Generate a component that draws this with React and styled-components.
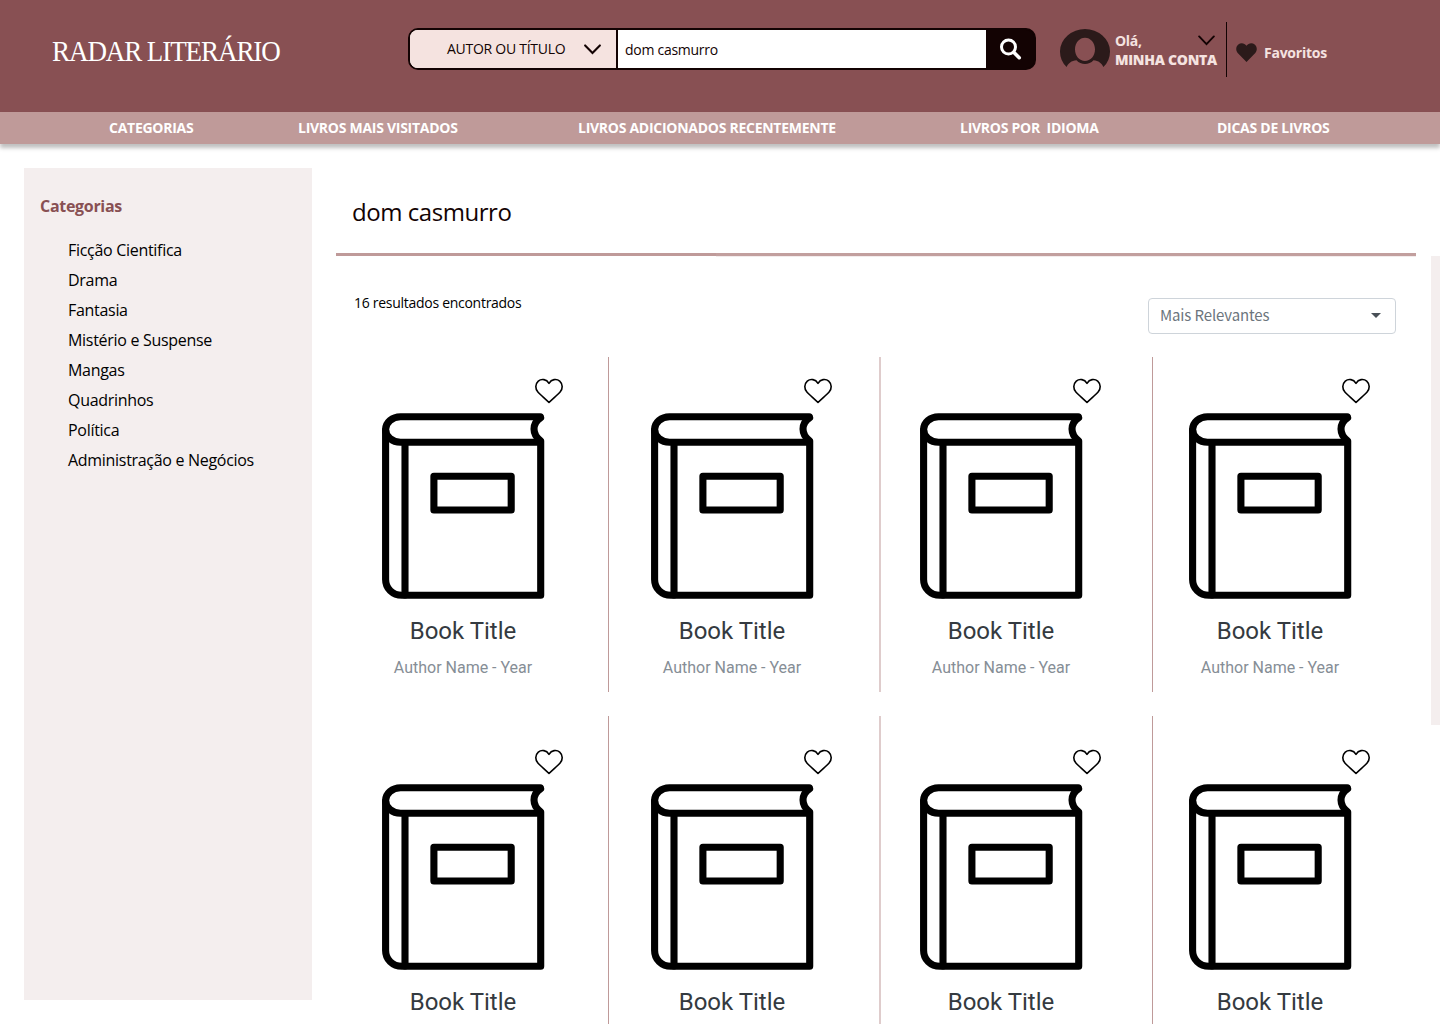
import React from "react";
import styled, { createGlobalStyle } from "styled-components";

const Global = createGlobalStyle`
  * { box-sizing: border-box; }
  body { margin: 0; background: #fff; font-family: "Open Sans", sans-serif; }
`;

const Page = styled.div`
  width: 1440px;
  height: 1024px;
  overflow: hidden;
  background: #fff;
`;
const Header = styled.header`
  height: 112px;
  background: #885053;
  display: flex;
  align-items: flex-start;
`;
const Logo = styled.div`
  width: 356px;
  margin: 33px 0 0 52px;
  font: 400 29.5px/36px "Liberation Serif", serif;
  letter-spacing: -1.2px;
  white-space: nowrap;
  color: #fff;
  transform: scaleX(0.917);
  transform-origin: 0 50%;
`;
const Search = styled.div`
  display: flex;
  width: 628px;
  height: 42px;
  margin-top: 28px;
  border: 2px solid #130303;
  border-radius: 10px;
  overflow: hidden;
  background: linear-gradient(90deg, #fff 600px, #130303 600px);
  color: #130303;
  font-size: 14px;
  line-height: 40px;
  letter-spacing: -0.27px;
`;
const Scope = styled.div`
  display: flex;
  align-items: center;
  width: 208px;
  padding-left: 37px;
  background: #f5e3e0;
  border-right: 2px solid #130303;
  white-space: nowrap;
`;
const ScopeText = styled.span`
  width: 137px;
`;
const Query = styled.div`
  flex: 1;
  padding-left: 7px;
`;
const SearchButton = styled.div`
  display: flex;
  align-items: center;
  width: 48px;
  padding-left: 12px;
  background: #130303;
`;
const Account = styled.div`
  display: flex;
  width: 167px;
  height: 55px;
  margin: 22px 0 0 24px;
  border-right: 1px solid #130303;
`;
const Avatar = styled.svg`
  flex: none;
  margin: 7px 5px 0 0;
`;
const AccountText = styled.div`
  flex: 1;
  padding-top: 9px;
  color: #f5e3e0;
  font-size: 14px;
  line-height: 19px;
  white-space: nowrap;
`;
const Greeting = styled.div`
  display: flex;
  justify-content: space-between;
  padding-right: 11px;
  font-weight: 700;
  letter-spacing: -0.3px;
`;
const AccountName = styled.div`
  font-weight: 800;
  letter-spacing: -0.27px;
`;
const Favorites = styled.div`
  display: flex;
  align-items: center;
  gap: 7px;
  margin: 42px 0 0 9px;
  height: 21px;
  color: #f5e3e0;
  font-size: 14px;
  font-weight: 700;
  letter-spacing: -0.25px;
`;
const Nav = styled.nav`
  position: relative;
  display: grid;
  grid-template-columns: 189px 280px 382px 257px 200px;
  height: 32px;
  padding-left: 109px;
  background: #bf9a99;
  box-shadow: 0 4px 4px rgba(0, 0, 0, 0.25);
`;
const NavItem = styled.a`
  color: #fff;
  font-size: 14px;
  font-weight: 700;
  line-height: 32px;
  letter-spacing: -0.27px;
  white-space: pre;
`;
const Body = styled.div`
  display: flex;
  align-items: flex-start;
`;
const Sidebar = styled.aside`
  width: 288px;
  height: 832px;
  margin: 24px 24px 0;
  padding: 26px 16px;
  background: #f4eeee;
`;
const SideTitle = styled.h2`
  margin: 0 0 17px;
  color: #885053;
  font-size: 16px;
  font-weight: 700;
  line-height: 24px;
  letter-spacing: -0.3px;
`;
const SideList = styled.ul`
  list-style: none;
  margin: 0;
  padding: 0 0 0 28px;
`;
const SideItem = styled.li`
  color: #000;
  font-size: 16px;
  line-height: 30px;
  letter-spacing: -0.3px;
`;
const Main = styled.main`
  width: 1080px;
`;
const Heading = styled.h1`
  height: 109px;
  margin: 0;
  padding: 51px 0 0 16px;
  color: #130303;
  font-size: 24px;
  font-weight: 400;
  line-height: 33px;
  letter-spacing: -0.45px;
`;
const Rule = styled.div`
  height: 4px;
  background: linear-gradient(90deg, #bf9a99 380px, #c29f9e 380px) 0 0 / 100% 3px no-repeat,
    linear-gradient(90deg, #fff 380px, #f3ecec 380px);
`;
const Toolbar = styled.div`
  display: flex;
  justify-content: space-between;
  height: 100px;
  padding: 41px 20px 0 18px;
`;
const Count = styled.div`
  margin-top: -6px;
  font-size: 14px;
  line-height: 22px;
  letter-spacing: -0.28px;
  color: #000;
`;
const Sort = styled.div`
  display: flex;
  align-items: center;
  justify-content: space-between;
  width: 248px;
  height: 36px;
  padding: 0 14px 0 11px;
  border: 1px solid #ced4da;
  border-radius: 4px;
  color: #6c757d;
  font: 400 15px/32px "Noto Sans CJK JP", sans-serif;
  letter-spacing: -0.13px;
`;
const SortText = styled.span`
  padding-bottom: 2px;
`;
const Caret = styled.span`
  margin-bottom: 1px;
  border: 5px solid transparent;
  border-top-color: #495057;
  border-bottom: 0;
`;
const Grid = styled.div`
  display: grid;
  grid-template-columns: 273px 272px 272px 263px;
  grid-auto-rows: 335px;
  row-gap: 24px;
`;
const Cell = styled.article`
  display: flex;
  flex-direction: column;
  align-items: flex-start;
  padding: ${(p) => p.$top}px 0 0 ${(p) => p.$left}px;
  border-right: ${(p) => p.$divider};
`;
const HeartSlot = styled.div`
  display: flex;
  justify-content: flex-end;
  width: 182px;
  height: 34px;
`;
const BookTitle = styled.h3`
  width: 164px;
  margin: 17px 0 0;
  text-align: center;
  color: #343a40;
  font: 400 24px/28px Roboto, sans-serif;
`;
const Author = styled.p`
  width: 164px;
  margin: 13px 0 0;
  text-align: center;
  color: #868e96;
  font: 400 16px/20px Roboto, sans-serif;
`;
const SideStrip = styled.div`
  width: 9px;
  height: 469px;
  margin: 112px 0 0 15px;
  background: #f4eeee;
`;

const Chevron = ({ w = 18, h = 11, s = 2.2 }) => (
  <svg width={w} height={h} viewBox="0 0 18 11" fill="none" stroke="#130303" strokeWidth={s}>
    <path d="M1.2 1.2 9 9.3 16.8 1.2" strokeLinecap="round" />
  </svg>
);

const Book = () => (
  <svg width="164" height="187" viewBox="0 0 164 187" fill="none" stroke="#000" strokeWidth="7.1" strokeLinejoin="round" strokeLinecap="round">
    <path d="M159.300 3.800H19.500A14.900 12.700 0 0 0 19.500 29.200H159.500" />
    <path d="M159.600 4.700C150.800 10.500 150.800 21.500 159.700 27.800V182.300H21C11.500 182.300 4.600 175.500 4.600 166.500V17" />
    <path d="M24 30V182M52.900 63.300H130.200V97H52.900Z" />
  </svg>
);

const HeartOutline = () => (
  <svg width="28" height="25" viewBox="0 0 28 25" overflow="visible" fill="none" stroke="#000" strokeWidth="1.6" strokeLinejoin="round">
    <path d="M14 4.300C11.500 .2 6.500-.6 3.300 2.100C0 5.100 .1 9.900 2.900 13C5.500 15.900 9.800 19.400 14 23.500C18.200 19.400 22.500 15.900 25.100 13C27.900 9.900 28 5.100 24.700 2.100C21.500-.6 16.500 .2 14 4.300Z" />
  </svg>
);

const categories = [
  "Ficção Cientifica",
  "Drama",
  "Fantasia",
  "Mistério e Suspense",
  "Mangas",
  "Quadrinhos",
  "Política",
  "Administração e Negócios",
];
const links = ["CATEGORIAS", "LIVROS MAIS VISITADOS", "LIVROS ADICIONADOS RECENTEMENTE", "LIVROS POR  IDIOMA", "DICAS DE LIVROS"];
const columns = [
  { left: 45, divider: "1px solid #bf9a99" },
  { left: 41, divider: "2px solid #dfcccc" },
  { left: 38, divider: "1px solid #bf9a99" },
  { left: 35, divider: "0" },
];
const rows = [{ top: 22, author: "Author Name - Year" }, { top: 34 }];

export default function App() {
  return (
    <Page>
      <Global />
      <Header>
        <Logo>RADAR LITERÁRIO</Logo>
        <Search>
          <Scope>
            <ScopeText>AUTOR OU TÍTULO</ScopeText>
            <Chevron w={17} />
          </Scope>
          <Query>dom casmurro</Query>
          <SearchButton>
            <svg width="24" height="24" viewBox="0 0 24 24" fill="none" stroke="#fff" strokeLinecap="round">
              <circle cx="10.500" cy="10" r="7" strokeWidth="3" />
              <path d="M16 15.500 21.200 20.700" strokeWidth="3.600" />
            </svg>
          </SearchButton>
        </Search>
        <Account>
          <Avatar width="50" height="40" viewBox="0 0 50 40">
            <path
              fill="#2b1a1a"
              fillRule="evenodd"
              d="M6.600 38.100A25 22.700 0 1 1 43.400 38.100C42 34.500 38.500 31.500 33.500 31.200C29 36.200 21 36.200 16.500 31.200C11.500 31.500 8 34.500 6.600 38.100ZM25 8.700C19.500 8.700 15 13.500 15 20.300S19.500 32 25 32S35 27.100 35 20.300S30.500 8.700 25 8.700Z"
            />
          </Avatar>
          <AccountText>
            <Greeting>
              Olá,
              <Chevron w={17} h={19} s={2} />
            </Greeting>
            <AccountName>MINHA CONTA</AccountName>
          </AccountText>
        </Account>
        <Favorites>
          <svg width="21" height="19" viewBox="0 0 21 19">
            <path fill="#2b1a1a" d="M10.500 2.800C8.500 0 4.800-.5 2.300 1.600C-.3 3.900-.4 7.400 1.700 9.900L10.500 19L19.300 9.900C21.400 7.400 21.300 3.900 18.700 1.600C16.200-.5 12.500 0 10.500 2.800Z" />
          </svg>
          Favoritos
        </Favorites>
      </Header>
      <Nav>
        {links.map((l) => (
          <NavItem key={l}>{l}</NavItem>
        ))}
      </Nav>
      <Body>
        <Sidebar>
          <SideTitle>Categorias</SideTitle>
          <SideList>
            {categories.map((c) => (
              <SideItem key={c}>{c}</SideItem>
            ))}
          </SideList>
        </Sidebar>
        <Main>
          <Heading>dom casmurro</Heading>
          <Rule />
          <Toolbar>
            <Count>16 resultados encontrados</Count>
            <Sort>
              <SortText>Mais Relevantes</SortText>
              <Caret />
            </Sort>
          </Toolbar>
          <Grid>
            {rows.map(({ top, author }) =>
              columns.map(({ left, divider }) => (
                <Cell key={`${top}-${left}`} $top={top} $left={left} $divider={divider}>
                  <HeartSlot>
                    <HeartOutline />
                  </HeartSlot>
                  <Book />
                  <BookTitle>Book Title</BookTitle>
                  {author && <Author>{author}</Author>}
                </Cell>
              ))
            )}
          </Grid>
        </Main>
        <SideStrip />
      </Body>
    </Page>
  );
}
